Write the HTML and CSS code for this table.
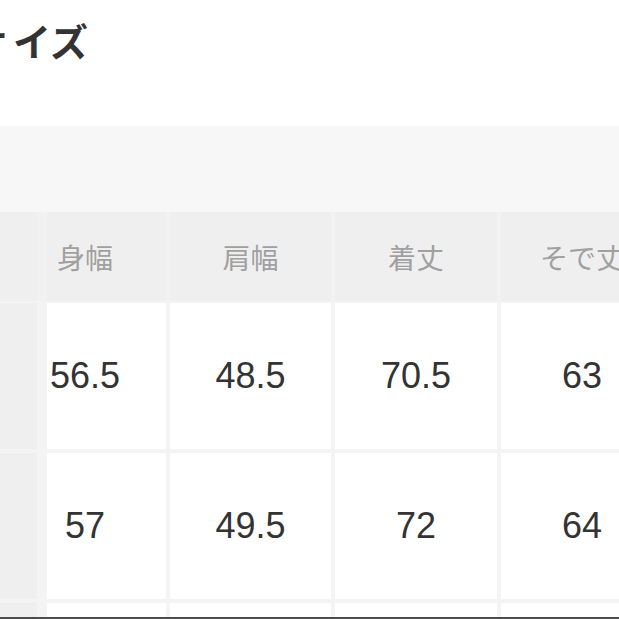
FILE: index.html
```html
<!DOCTYPE html>
<html lang="ja">
<head>
<meta charset="utf-8">
<title>サイズ</title>
<link rel="stylesheet" href="styles.css">
</head>
<body>
<div class="page">
  <div class="viewport">
    <div class="title-block">
      <h1 class="title"><span class="title-lead">サ</span>イズ</h1>
    </div>
    <div class="band"></div>
    <div class="table">
      <div class="row head">
        <div class="cell label"></div>
        <div class="cell first">身幅</div>
        <div class="cell">肩幅</div>
        <div class="cell">着丈</div>
        <div class="cell">そで丈</div>
      </div>
      <div class="row body">
        <div class="cell label"></div>
        <div class="cell first">56.5</div>
        <div class="cell">48.5</div>
        <div class="cell">70.5</div>
        <div class="cell">63</div>
      </div>
      <div class="row body">
        <div class="cell label"></div>
        <div class="cell first">57</div>
        <div class="cell">49.5</div>
        <div class="cell">72</div>
        <div class="cell">64</div>
      </div>
      <div class="row body">
        <div class="cell label"></div>
        <div class="cell first"></div>
        <div class="cell"></div>
        <div class="cell"></div>
        <div class="cell"></div>
      </div>
    </div>
  </div>
  <div class="bottom-line"></div>
</div>
</body>
</html>
```

FILE: styles.css
```css
html, body {
  margin: 0;
  padding: 0;
  background: #ffffff;
}

.page {
  width: 619px;
  height: 619px;
  overflow: hidden;
  display: flex;
  flex-direction: column;
}

.viewport {
  height: 617px;
  overflow: hidden;
  flex: none;
}

.bottom-line {
  height: 2px;
  background: #4d4d4d;
  flex: none;
}

.title-block {
  height: 126px;
  box-sizing: border-box;
  padding-top: 21px;
  overflow: hidden;
}

.title {
  margin: 0 0 0 -31px;
  font-family: "Noto Sans CJK JP", "Noto Sans", sans-serif;
  font-weight: 700;
  font-size: 38px;
  line-height: 38px;
  color: #333333;
  white-space: nowrap;
}

.title-lead {
  letter-spacing: 6px;
}

.band {
  height: 86px;
  background: #f7f7f7;
}

.table {
  width: 680px;
  display: flex;
  flex-direction: column;
  background: #f4f4f4;
}

.row {
  display: grid;
  grid-template-columns: 43px 119px 161px 162px 162px;
  column-gap: 4px;
}

.row.head {
  height: 89px;
  background: #f2f2f2;
  margin-bottom: 2px;
}

.row.body {
  height: 146px;
  margin-bottom: 4px;
}

.cell {
  display: flex;
  align-items: center;
  justify-content: center;
  background: #ffffff;
  font-family: "Liberation Sans", Arial, sans-serif;
  font-size: 36px;
  color: #333333;
}

.cell.label {
  background: #efefef;
  border-right: 6px solid #f4f4f4;
}

.cell.first {
  padding-right: 43px;
}

.head .cell {
  background: #efefef;
  font-family: "Noto Sans CJK JP", "Noto Sans", sans-serif;
  font-size: 28px;
  color: #a0a0a0;
  white-space: nowrap;
  justify-content: center;
}

.head .cell.label {
  border-right: 6px solid #f1f1f1;
}
```
